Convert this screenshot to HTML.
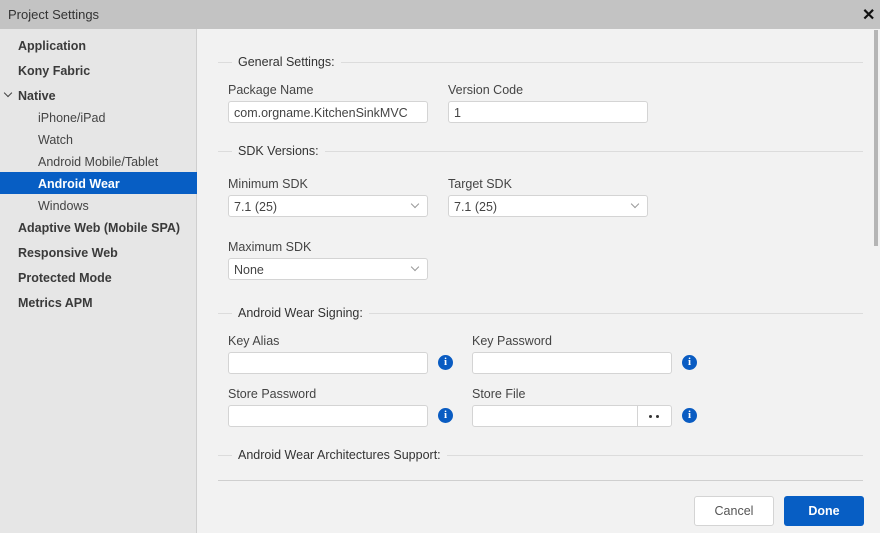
<!DOCTYPE html>
<html><head><style>
*{box-sizing:border-box;margin:0;padding:0}
body{width:880px;height:533px;overflow:hidden;font-family:"Liberation Sans",sans-serif;background:#f2f2f2;position:relative;color:#333}
.a{position:absolute}
.t{font-size:12.5px;white-space:nowrap}
.side{left:0;top:29px;width:197px;height:504px;background:#e6e6e6;border-right:1px solid #cfcfcf}
.si{position:absolute;left:18px;font-size:12.5px;font-weight:bold;color:#3a3a3a}
.ss{position:absolute;left:38px;font-size:12.5px;color:#444}
.hdr{position:absolute;left:218px;width:645px;height:1px;background:#dcdcdc}
.hdr span{position:absolute;left:14px;top:-7px;background:#f2f2f2;padding:0 6px;font-size:12.5px;color:#333}
.lbl{position:absolute;font-size:12.5px;color:#444;margin-top:1px}
.in{position:absolute;width:200px;height:22px;background:#fff;border:1px solid #d4d4d4;border-radius:3px;font-size:12.5px;color:#444;padding:4px 5px 0}
.in .ch{position:absolute;right:9px;top:5px;width:6px;height:6px;border-right:1px solid #999;border-bottom:1px solid #999;transform:rotate(45deg)}
.inf{position:absolute;width:15px;height:15px;border-radius:50%;background:#0a5cc2;color:#fff;font-size:11px;font-weight:bold;text-align:center;line-height:15px;font-family:"Liberation Serif",serif}
</style></head><body>
<div class="a" style="left:0;top:0;width:880px;height:29px;background:#c3c3c3"></div>
<div class="a t" style="left:8px;top:7px;font-size:13px;color:#333">Project Settings</div>
<div class="a" style="left:862px;top:5px;font-size:16px;font-weight:bold;color:#111">✕</div>
<div class="a side"></div>
<div class="si" style="top:39px">Application</div>
<div class="si" style="top:64px">Kony Fabric</div>
<div class="a" style="left:5px;top:90px;width:6px;height:6px;border-right:1px solid #444;border-bottom:1px solid #444;transform:rotate(45deg)"></div>
<div class="si" style="top:89px">Native</div>
<div class="ss" style="top:111px">iPhone/iPad</div>
<div class="ss" style="top:133px">Watch</div>
<div class="ss" style="top:155px">Android Mobile/Tablet</div>
<div class="a" style="left:0;top:172px;width:197px;height:22px;background:#075ec4"></div>
<div class="ss" style="top:177px;color:#fff;font-weight:bold">Android Wear</div>
<div class="ss" style="top:199px">Windows</div>
<div class="si" style="top:221px">Adaptive Web (Mobile SPA)</div>
<div class="si" style="top:246px">Responsive Web</div>
<div class="si" style="top:271px">Protected Mode</div>
<div class="si" style="top:296px">Metrics APM</div>
<div class="a" style="left:874px;top:30px;width:4px;height:216px;background:#b5b5b5"></div>

<div class="hdr" style="top:62px"><span>General Settings:</span></div>
<div class="lbl" style="left:228px;top:82px">Package Name</div>
<div class="lbl" style="left:448px;top:82px">Version Code</div>
<div class="in" style="left:228px;top:101px">com.orgname.KitchenSinkMVC</div>
<div class="in" style="left:448px;top:101px">1</div>

<div class="hdr" style="top:151px"><span>SDK Versions:</span></div>
<div class="lbl" style="left:228px;top:176px">Minimum SDK</div>
<div class="lbl" style="left:448px;top:176px">Target SDK</div>
<div class="in" style="left:228px;top:195px">7.1 (25)<i class="ch"></i></div>
<div class="in" style="left:448px;top:195px">7.1 (25)<i class="ch"></i></div>
<div class="lbl" style="left:228px;top:239px">Maximum SDK</div>
<div class="in" style="left:228px;top:258px">None<i class="ch"></i></div>

<div class="hdr" style="top:313px"><span>Android Wear Signing:</span></div>
<div class="lbl" style="left:228px;top:333px">Key Alias</div>
<div class="lbl" style="left:472px;top:333px">Key Password</div>
<div class="in" style="left:228px;top:352px"></div>
<div class="in" style="left:472px;top:352px"></div>
<div class="inf" style="left:438px;top:355px">i</div>
<div class="inf" style="left:682px;top:355px">i</div>
<div class="lbl" style="left:228px;top:386px">Store Password</div>
<div class="lbl" style="left:472px;top:386px">Store File</div>
<div class="in" style="left:228px;top:405px"></div>
<div class="in" style="left:472px;top:405px"><div class="a" style="left:164px;top:0;width:1px;height:20px;background:#d4d4d4"></div><div class="a" style="left:176px;top:9px;width:3px;height:3px;border-radius:50%;background:#333"></div><div class="a" style="left:183px;top:9px;width:3px;height:3px;border-radius:50%;background:#333"></div></div>
<div class="inf" style="left:438px;top:408px">i</div>
<div class="inf" style="left:682px;top:408px">i</div>

<div class="hdr" style="top:455px"><span>Android Wear Architectures Support:</span></div>
<div class="a" style="left:218px;top:480px;width:645px;height:1px;background:#cfcfcf"></div>
<div class="a" style="left:694px;top:496px;width:80px;height:30px;background:#fff;border:1px solid #d4d4d4;border-radius:3px;text-align:center;line-height:29px;font-size:12.5px;color:#555">Cancel</div>
<div class="a" style="left:784px;top:496px;width:80px;height:30px;background:#075ec4;border-radius:3px;text-align:center;line-height:31px;font-size:12.5px;font-weight:bold;color:#fff">Done</div>
</body></html>
